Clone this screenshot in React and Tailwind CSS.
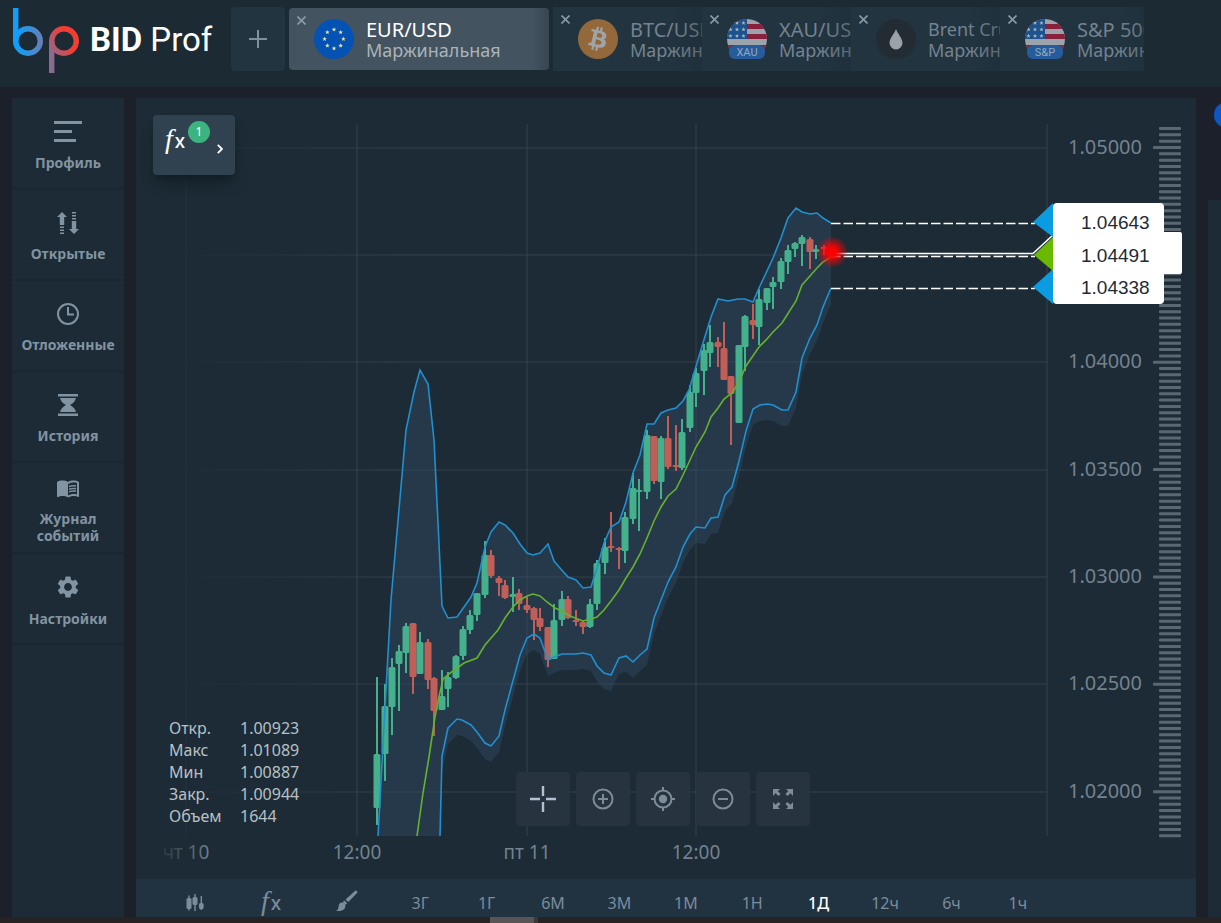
import React, { useState } from 'react'
import { FaBitcoin } from 'react-icons/fa'
import { MdMenuBook, MdSettings } from 'react-icons/md'

// x, open/close top, open/close bottom, high, low, direction
const candles = [
  [377, 754, 808, 677, 825, 1], [385, 706, 754, 684, 781, 1], [392, 667, 707, 658, 735, 1],
  [399, 651, 664, 645, 711, 1], [406, 626, 653, 623, 673, 1], [413, 623, 677, 623, 694, 0],
  [420, 642, 674, 632, 674, 1], [428, 642, 680, 639, 689, 0], [434, 678, 711, 677, 736, 0],
  [442, 696, 710, 670, 710, 1], [448, 677, 689, 672, 707, 1], [456, 656, 678, 655, 679, 1],
  [463, 629, 656, 626, 660, 1], [470, 615, 630, 610, 634, 1], [477, 593, 615, 593, 621, 1],
  [485, 555, 595, 541, 598, 1], [491, 555, 576, 550, 578, 0], [499, 578, 583, 576, 596, 0],
  [505, 585, 598, 580, 599, 0], [513, 594, 597, 577, 612, 1], [519, 593, 604, 589, 610, 0],
  [527, 605, 610, 597, 613, 0], [534, 608, 620, 607, 640, 0], [540, 618, 627, 608, 631, 0],
  [548, 627, 660, 627, 667, 0], [554, 620, 659, 604, 659, 1], [562, 599, 620, 591, 626, 1],
  [568, 599, 618, 596, 619, 0], [576, 620, 622, 610, 626, 0], [583, 622, 627, 621, 634, 0],
  [590, 604, 627, 599, 628, 1], [597, 563, 604, 560, 610, 1], [605, 547, 563, 538, 574, 1],
  [611, 546, 548, 512, 552, 0], [619, 548, 550, 547, 569, 0], [625, 517, 551, 512, 563, 1],
  [633, 488, 519, 473, 524, 1], [639, 490, 492, 479, 531, 1], [647, 435, 492, 430, 499, 1],
  [654, 436, 481, 436, 484, 0], [661, 438, 482, 436, 499, 1], [668, 438, 467, 416, 469, 0],
  [676, 465, 467, 425, 471, 0], [682, 432, 468, 419, 470, 1], [690, 392, 428, 385, 432, 1],
  [696, 373, 393, 368, 407, 1], [704, 350, 371, 344, 395, 1], [710, 342, 353, 325, 367, 1],
  [718, 342, 347, 337, 367, 0], [724, 348, 380, 322, 380, 0], [731, 376, 394, 376, 445, 0],
  [739, 345, 423, 345, 423, 1], [745, 316, 347, 315, 371, 1], [753, 320, 325, 304, 339, 0],
  [759, 299, 327, 289, 345, 1], [767, 288, 303, 288, 310, 1], [773, 282, 287, 277, 309, 1],
  [781, 261, 282, 258, 289, 1], [788, 250, 262, 245, 274, 1], [795, 243, 249, 242, 257, 1],
  [802, 237, 244, 235, 266, 1], [810, 239, 252, 237, 269, 0], [816, 249, 252, 245, 259, 1],
  [824, 247, 249, 245, 255, 0],
]

const upper = [
  [378, 836], [386, 690], [391, 600], [406, 430], [414, 392], [420, 370], [428, 384], [434, 440], [442, 606],
  [448, 618], [457, 617], [471, 597], [477, 583], [485, 547], [491, 532], [499, 522], [505, 525], [513, 533],
  [520, 544], [527, 553], [533, 555], [540, 553], [548, 544], [554, 561], [560, 568], [568, 577], [576, 580],
  [583, 588], [591, 587], [597, 568], [604, 543], [611, 527], [619, 522], [626, 502], [633, 473], [640, 455],
  [647, 424], [654, 424], [661, 413], [668, 410], [676, 408], [683, 401], [689, 390], [697, 363], [703, 343],
  [711, 317], [718, 299], [728, 301], [738, 299], [745, 299], [753, 302], [759, 288], [773, 258], [781, 238],
  [788, 218], [796, 208], [802, 212], [810, 214], [817, 213], [823, 218], [831, 223],
]

const lower = [
  [440, 836], [442, 756], [448, 728], [457, 719], [462, 720], [471, 725], [477, 732], [485, 743], [491, 746],
  [499, 736], [505, 710], [514, 677], [520, 655], [527, 638], [534, 634], [540, 638], [548, 660], [554, 657],
  [562, 654], [576, 654], [583, 653], [591, 655], [597, 666], [604, 673], [611, 675], [619, 658], [626, 656],
  [633, 662], [640, 655], [647, 649], [654, 618], [668, 582], [676, 567], [683, 547], [690, 534], [696, 527],
  [705, 528], [711, 518], [718, 517], [725, 495], [732, 487], [739, 461], [746, 431], [753, 409], [760, 405],
  [767, 404], [773, 405], [782, 410], [788, 410], [796, 392], [802, 358], [810, 338], [817, 325], [823, 307],
  [831, 288],
]

const middle = [
  [417, 836], [423, 793], [429, 757], [435, 717], [439, 697], [443, 679], [449, 674], [464, 663], [477, 658],
  [485, 645], [491, 638], [498, 630], [505, 618], [513, 607], [520, 600], [527, 596], [533, 594], [540, 596],
  [547, 602], [555, 608], [562, 611], [570, 616], [583, 621], [591, 619], [597, 617], [604, 610], [611, 601],
  [619, 590], [626, 578], [633, 567], [640, 554], [647, 538], [654, 521], [661, 507], [668, 496], [676, 489],
  [683, 475], [690, 460], [696, 447], [705, 432], [711, 417], [718, 408], [724, 399], [732, 393], [739, 382],
  [746, 366], [759, 347], [767, 339], [773, 332], [782, 323], [796, 301], [802, 285], [810, 276], [817, 268],
  [823, 262], [831, 257],
]

const gridRows = [148, 255, 362, 470, 577, 684, 792]
const prices = [['1.05000', 148], ['1.04000', 362], ['1.03500', 470], ['1.03000', 577], ['1.02500', 684], ['1.02000', 792]]
const periods = ['3Г', '1Г', '6М', '3М', '1М', '1Н', '1Д', '12ч', '6ч', '1ч']
const quote = [['Откр.', '1.00923'], ['Макс', '1.01089'], ['Мин', '1.00887'], ['Закр.', '1.00944'], ['Объем', '1644']]

const toPoints = (list) => list.map((p) => p.join(',')).join(' ')
const band = [...upper, ...lower.map(([x, y]) => [x, y + 16]).reverse()]

const star = (cx, cy, r) => {
  const pts = []
  for (let i = 0; i < 10; i++) {
    const a = (Math.PI / 5) * i - Math.PI / 2
    const d = i % 2 ? r * 0.42 : r
    pts.push([cx + d * Math.cos(a), cy + d * Math.sin(a)])
  }
  return toPoints(pts)
}

function Logo() {
  return (
    <svg viewBox="0 0 68 67" className="w-[68px] h-[67px] shrink-0" fill="none" strokeWidth="5.400">
      <defs>
        <linearGradient id="logoB" gradientUnits="userSpaceOnUse" x1="0" y1="0" x2="30" y2="0">
          <stop offset="0.2" stopColor="#129df8" />
          <stop offset="1" stopColor="#6a7db5" />
        </linearGradient>
        <linearGradient id="logoP" gradientUnits="userSpaceOnUse" x1="36" y1="46" x2="64" y2="30">
          <stop offset="0" stopColor="#8a6c92" />
          <stop offset="0.7" stopColor="#f33d33" />
        </linearGradient>
      </defs>
      <circle cx="15" cy="34" r="12.300" stroke="url(#logoB)" />
      <path d="M0 1h5.400v33H0z" fill="#129df8" />
      <circle cx="51" cy="34" r="12.300" stroke="url(#logoP)" />
      <path d="M36 34h5.400v32H36z" fill="url(#logoP)" />
    </svg>
  )
}

function EuIcon() {
  return (
    <svg viewBox="0 0 40 40" className="w-10 h-10 shrink-0">
      <circle cx="20" cy="20" r="20" fill="#0452b4" />
      {[0, 1, 2, 3, 4, 5, 6, 7].map((i) => (
        <polygon key={i} fill="#e9e796" points={star(20 + 9.4 * Math.cos((i * Math.PI) / 4), 20 + 9.4 * Math.sin((i * Math.PI) / 4), 2.4)} />
      ))}
    </svg>
  )
}

function BtcIcon() {
  return (
    <span className="w-10 h-10 shrink-0 rounded-full bg-[radial-gradient(#a0a4a7_60%,#93683a_61%)]">
      <FaBitcoin className="w-10 h-10 text-[#93683a]" />
    </span>
  )
}

function OilIcon() {
  return (
    <svg viewBox="0 0 40 40" className="w-10 h-10 shrink-0">
      <circle cx="20" cy="20" r="20" fill="#232b33" />
      <path d="M20 10c1 4 6.500 9 6.500 14a6.500 6.500 0 0 1-13 0c0-5 5.500-10 6.500-14z" fill="#9ba2a8" />
    </svg>
  )
}

function UsIcon({ id, label }) {
  return (
    <svg viewBox="0 0 40 40" className="w-10 h-10 shrink-0">
      <clipPath id={id}><circle cx="20" cy="20" r="20" /></clipPath>
      <g clipPath={'url(#' + id + ')'}>
        <rect width="40" height="40" fill="#9ca3ab" />
        <path d="M0 5h40v5H0zM0 15h40v5H0zM0 26h40v5H0z" fill="#87213d" />
        <rect width="20" height="20" fill="#1c528d" />
        {[4, 10.5, 17].map((y) => [3.5, 10, 16.5].map((x) => (
          <polygon key={x + '-' + y} points={star(x, y, 2.3)} fill="#a9b3bd" />
        )))}
      </g>
      <rect x="2" y="26" width="36" height="14" rx="6" fill="#255c9c" />
      <text x="20" y="37" textAnchor="middle" fontSize="11" fill="#96a8bd" className="font-['Roboto',sans-serif]">{label}</text>
    </svg>
  )
}

function Tab({ title, icon, active, small }) {
  return (
    <div className={active
      ? 'relative flex items-center w-[260px] h-[62px] mt-px mr-1 shrink-0 pl-[25px] rounded bg-[#43535f] overflow-hidden'
      : 'relative flex items-center w-[149px] shrink-0 h-16 pl-[25px] bg-[#213440] overflow-hidden'}>
      <button className="flex items-center gap-3 text-left whitespace-nowrap">
        {icon}
        <span className={active ? 'pt-0.5 text-white' : 'pt-0.5 text-[#74838f]'}>
          <span className={small ? 'block text-[18px] leading-[21px]' : 'block text-[20px] leading-[21px]'}>{title}</span>
          <span className={active ? 'block text-[18px] leading-[21px] text-[#aab3ba]' : 'block text-[18px] leading-[21px]'}>Маржинальная</span>
        </span>
      </button>
      <span className={active
        ? 'absolute inset-y-0 right-0 w-4 bg-linear-to-r from-transparent to-[#1a2832]/30'
        : 'absolute inset-y-0 right-0 w-8 bg-linear-to-r from-transparent to-[#1a2832]/30'} />
      <button aria-label="Закрыть" className="absolute left-2 top-2 text-[#8b9aa7]">
        <svg viewBox="0 0 9 9" className="w-[9px] h-[9px]" stroke="currentColor" strokeWidth="1.600"><path d="M.5.5l8 8M8.500.5l-8 8" /></svg>
      </button>
    </div>
  )
}

function Header() {
  return (
    <header className="flex h-[87px] shrink-0 bg-[#1c2a34] pt-[7px]">
      <a href="#" className="flex w-[231px] shrink-0 pl-[13px] text-white">
        <Logo />
        <span className="ml-[9px] mt-[11px] text-[33px] leading-[44px] whitespace-nowrap font-['Roboto',sans-serif]"><b>BID</b> Prof</span>
      </a>
      <button aria-label="Добавить" className="flex items-center justify-center w-[54px] h-16 mr-1 shrink-0 rounded bg-[#213440] text-[#7f909e]">
        <svg viewBox="0 0 18 18" className="w-[18px] h-[18px]" stroke="currentColor" strokeWidth="2"><path d="M9 0v18M0 9h18" /></svg>
      </button>
      <nav className="flex flex-1 min-w-0 mr-[77px] overflow-hidden">
        <Tab active title="EUR/USD" icon={<EuIcon />} />
        <Tab title="BTC/USD" icon={<BtcIcon />} />
        <Tab title="XAU/USD" icon={<UsIcon id="xau" label="XAU" />} />
        <Tab small title="Brent Crude" icon={<OilIcon />} />
        <Tab title="S&P 500" icon={<UsIcon id="sp" label="S&P" />} />
      </nav>
    </header>
  )
}

const menu = [
  ['Профиль', <svg viewBox="0 0 28 24" className="w-7 h-6" fill="currentColor"><path d="M0 1h28v3H0zM0 10h18v3H0zM0 19h22v3H0z" /></svg>],
  ['Открытые', <svg viewBox="0 0 24 24" className="w-6 h-6" fill="currentColor"><path d="M6 1l5 5H8.200v8H3.800V6H1zM4 15.500h4V17H4zM4 18.500h4V20H4zM4 21.500h4V23H4zM18 23l-5-5h2.800v-8h4.400v8H23zM16 1h4v1.500h-4zM16 4h4v1.500h-4zM16 7h4v1.500h-4z" /></svg>],
  ['Отложенные', <svg viewBox="0 0 24 24" className="w-6 h-6" fill="none" stroke="currentColor" strokeWidth="2"><circle cx="12" cy="12" r="10" /><path d="M12 5v7.500h6" /></svg>],
  ['История', <svg viewBox="0 0 24 24" className="w-6 h-6" fill="currentColor"><path d="M2 1h20v2.500H2zM2 20.500h20V23H2zM4 5h16c-1 4-4 6-6 7 2 1 5 3 6 7H4c1-4 4-6 6-7-2-1-5-3-6-7z" /></svg>],
  ['Журнал событий', <MdMenuBook className="w-[26px] h-6" />],
  ['Настройки', <MdSettings className="w-[26px] h-[26px]" />],
]

function Sidebar() {
  return (
    <aside className="w-28 shrink-0 pt-px bg-[#1c2b35]">
      {menu.map(([label, icon]) => (
        <button key={label} className="flex flex-col items-center justify-center gap-2.5 w-full h-[91px] pt-1 px-1 border-b-2 border-[#1a2730] text-[#8293a2] text-[14px] leading-[17px] font-bold">
          {icon}
          <span className={label.includes(' ') ? 'w-20' : ''}>{label}</span>
        </button>
      ))}
    </aside>
  )
}

function Chart() {
  const ticks = Array.from({ length: 113 }, (_, i) => i - 3)
  return (
    <svg viewBox="136 98 1060 781" preserveAspectRatio="xMinYMin meet" className="block w-full h-full">
      <defs>
        <linearGradient id="fadeRow" gradientUnits="userSpaceOnUse" x1="165" y1="0" x2="400" y2="0">
          <stop offset="0" stopColor="#3b4b56" stopOpacity="0" />
          <stop offset="1" stopColor="#3b4b56" />
        </linearGradient>
        <linearGradient id="fadeDay" gradientUnits="userSpaceOnUse" x1="160" y1="0" x2="212" y2="0">
          <stop offset="0" stopColor="#74828f" stopOpacity="0.1" />
          <stop offset="1" stopColor="#74828f" />
        </linearGradient>
        <radialGradient id="glow">
          <stop offset="0" stopColor="#ff0000" />
          <stop offset="0.3" stopColor="#ff0000" stopOpacity="0.95" />
          <stop offset="1" stopColor="#ff0000" stopOpacity="0" />
        </radialGradient>
        <clipPath id="plot"><rect x="136" y="98" width="912" height="738" /></clipPath>
      </defs>

      <g clipPath="url(#plot)">
        <polygon points={toPoints(band)} fill="#25394b" />
      </g>
      {gridRows.map((y) => <rect key={y} x="165" y={y - 1} width="882" height="2" fill="url(#fadeRow)" opacity="0.35" />)}
      <rect x="185" y="175" width="2" height="661" fill="#1f2e38" />
      {[357, 527, 696, 1047].map((x) => <rect key={x} x={x - 1} y="124" width="2" height="712" fill="#3b4b56" opacity="0.35" />)}

      {candles.map(([x, top, bottom, high, low, up]) => (
        <g key={x} fill={up ? '#45b08c' : '#c25e58'}>
          <rect x={x - 1} y={high} width="2" height={low - high} />
          <rect x={x - 3.5} y={top} width="7" height={bottom - top} rx="1.500" />
        </g>
      ))}
      <g fill="none" strokeWidth="1.600" clipPath="url(#plot)">
        <polyline points={toPoints(upper)} stroke="#2090d0" />
        <polyline points={toPoints(lower)} stroke="#2090d0" />
        <polyline points={toPoints(middle)} stroke="#66b22c" />
      </g>

      <g stroke="#fff" strokeWidth="1.500" strokeDasharray="9.500 3">
        <path d="M831 223.500H1035" />
        <path d="M831 256.500H1035" />
        <path d="M831 288.500H1035" />
      </g>
      <path d="M835 253.500H1033L1053 235" fill="none" stroke="#fff" strokeWidth="1.600" />
      <circle cx="832" cy="252" r="16" fill="url(#glow)" />

      {ticks.map((i) => {
        const major = i % 34 === 0 || (i > 34 && i % 17 === 0)
        return <rect key={i} x={major ? 1153 : 1159} y={146 + i * 6.315} width={major ? 28 : 22} height="3" rx="1" fill="#5a6874" />
      })}

      <rect x="1053" y="203" width="111" height="101" rx="4" fill="#fff" />
      <rect x="1053" y="232" width="129" height="42" rx="2" fill="#fff" />
      <path d="M1053 203v34l-20-15z" fill="#0a9be0" />
      <path d="M1053 269v35l-20-17z" fill="#0a9be0" />
      <path d="M1053 237v34l-19-16z" fill="#68b900" />
      <g fontSize="19" fill="#1d2b36" className="font-['Liberation_Sans',Arial,sans-serif]">
        <text x="1081" y="229">1.04643</text>
        <text x="1081" y="262">1.04491</text>
        <text x="1081" y="294">1.04338</text>
      </g>

      <g fontSize="20" fill="#74828f">
        {prices.map(([label, y]) => <text key={label} x="1068" y={y + 6}>{label}</text>)}
      </g>
      <g fontSize="19" fill="#74828f" textAnchor="middle">
        <text x="186" y="859" fill="url(#fadeDay)">чт 10</text>
        <text x="357" y="859">12:00</text>
        <text x="527" y="859">пт 11</text>
        <text x="696" y="859">12:00</text>
      </g>
    </svg>
  )
}

function Fx({ className }) {
  return (
    <span className={className}>
      <i className="mr-0.5 text-[28px] font-['Liberation_Serif',serif]">f</i>
      <span className="text-[19px] font-medium">x</span>
    </span>
  )
}

function ZoomButton({ label, children }) {
  return (
    <button aria-label={label} className="flex items-center justify-center w-[54px] h-[54px] rounded bg-[#27343f] text-[#7e8b98]">
      {children}
    </button>
  )
}

function ZoomBar() {
  return (
    <div className="absolute bottom-[53px] inset-x-0 mr-1.5 flex justify-center gap-1.5">
      <ZoomButton label="Перекрестие">
        <svg viewBox="0 0 26 26" className="w-[26px] h-[26px] text-[#b3bfd2]" stroke="currentColor" strokeWidth="2.400"><path d="M13 0v10M13 16v10M0 13h10M16 13h10" /></svg>
      </ZoomButton>
      <ZoomButton label="Увеличить">
        <svg viewBox="0 0 24 24" className="w-6 h-6" fill="none" stroke="currentColor" strokeWidth="2"><circle cx="12" cy="12" r="9.500" /><path d="M12 7v10M7 12h10" /></svg>
      </ZoomButton>
      <ZoomButton label="По центру">
        <svg viewBox="0 0 24 24" className="w-6 h-6" fill="none" stroke="currentColor" strokeWidth="2"><circle cx="12" cy="12" r="8.500" /><circle cx="12" cy="12" r="4.200" fill="currentColor" stroke="none" /><path d="M12 0v4M12 20v4M0 12h4M20 12h4" /></svg>
      </ZoomButton>
      <ZoomButton label="Уменьшить">
        <svg viewBox="0 0 24 24" className="w-6 h-6" fill="none" stroke="currentColor" strokeWidth="2"><circle cx="12" cy="12" r="9.500" /><path d="M7 12h10" /></svg>
      </ZoomButton>
      <ZoomButton label="На весь экран">
        <svg viewBox="0 0 20 20" className="w-5 h-5" fill="currentColor">
          <path d="M0 0h7L4.800 2.200 7.600 5 5.500 7.100 2.500 4.300 0 7zM20 0v7l-2.500-2.700-3 2.800L12.400 5l2.800-2.800L13 0zM0 20v-7l2.500 2.700 3-2.800L7.600 15l-2.800 2.800L7 20zM20 20h-7l2.200-2.200-2.800-2.800 2.100-2.100 3 2.800L20 13z" />
        </svg>
      </ZoomButton>
    </div>
  )
}

function Toolbar() {
  const [period, setPeriod] = useState('1Д')
  return (
    <div className="flex h-[38px] shrink-0 pl-[21px] pr-[145px] pt-[10px] bg-[#213341] text-[#7c8c9a]">
      <button aria-label="Тип графика" className="flex items-center justify-center w-[76px] h-7 shrink-0">
        <svg viewBox="0 0 18 18" className="w-[18px] h-[18px]" fill="currentColor">
          <path d="M2.200 1.500h1.400v15H2.200zM8.300 0h1.400v17H8.300zM14.600 2h1.400v14h-1.400z" />
          <rect x="0.500" y="4" width="5" height="11" rx="1.500" />
          <rect x="6.500" y="3" width="5" height="8" rx="1.500" />
          <rect x="13" y="9" width="4.600" height="6" rx="1.500" />
        </svg>
      </button>
      <button aria-label="Индикаторы" className="flex items-center justify-center w-[76px] h-6 shrink-0"><Fx className="leading-none" /></button>
      <button aria-label="Рисование" className="flex items-center justify-center w-[76px] h-6 shrink-0">
        <svg viewBox="0 0 22 22" className="w-[22px] h-[22px]" fill="currentColor"><path d="M19.500.6a2 2 0 0 1 2 2L12.300 12 9.500 9.400zM8.300 10.500l2.900 2.800-1.500 1.500-2.800-2.900zM6 12.600c2 0 3.400 1.400 3.400 3.400C9.400 19.500 6 21.500 0 21c1.800-1 2.400-2.500 2.600-4.600.2-2.300 1.400-3.800 3.400-3.800z" /></svg>
      </button>
      <div className="flex flex-1 ml-0.5">
        {periods.map((p) => (
          <button key={p} onClick={() => setPeriod(p)} className={p === period ? 'flex-1 h-7 text-[16px] text-white font-medium' : 'flex-1 h-7 text-[16px]'}>{p}</button>
        ))}
      </div>
    </div>
  )
}

export default function App() {
  return (
    <div className="flex flex-col h-screen overflow-hidden bg-[#1c202b] font-['Noto_Sans','Open_Sans',sans-serif]">
      <Header />
      <div className="flex flex-1 min-h-0 gap-3 pt-[11px] pl-3">
        <Sidebar />
        <main className="flex flex-col flex-1 min-w-0">
          <section className="relative flex-1 min-h-0 bg-[#1c2b35]">
            <Chart />
            <button className="absolute left-[17px] top-[17px] flex w-[82px] h-[60px] pl-3 rounded bg-[#304250] text-white shadow-lg shadow-black/30">
              <Fx className="mt-2.5 leading-none" />
              <span className="absolute left-[35px] top-1.5 w-[22px] h-[22px] rounded-full bg-[#3cb480] text-[12px] leading-[22px] text-center">1</span>
              <svg viewBox="0 0 6 10" className="absolute right-3 top-[29px] w-1.5 h-2.5" fill="none" stroke="currentColor" strokeWidth="1.800"><path d="M.8.8L5 5 .8 9.200" /></svg>
            </button>
            <table className="absolute left-[33px] bottom-[52px] text-left text-[16px] leading-[22px] text-[#b9c0c5]">
              <tbody>
                {quote.map(([name, value]) => (
                  <tr key={name}>
                    <th className="p-0 w-[71px] font-normal">{name}</th>
                    <td className="p-0">{value}</td>
                  </tr>
                ))}
              </tbody>
            </table>
            <ZoomBar />
          </section>
          <Toolbar />
        </main>
        <div className="flex flex-col w-[13px] shrink-0 overflow-hidden">
          <button aria-label="Чат" className="w-[26px] h-[26px] mt-1 ml-1.5 shrink-0 rounded-full bg-[#0b57c4]" />
          <div className="h-[72px] shrink-0" />
          <div className="flex-1 bg-[#1c2b35]" />
        </div>
      </div>
      <div className="h-1.5 shrink-0 pl-[490px] bg-[#272224]">
        <div className="w-12 h-full bg-[#575556] border-r-4 border-[#3a3738]" />
      </div>
    </div>
  )
}
